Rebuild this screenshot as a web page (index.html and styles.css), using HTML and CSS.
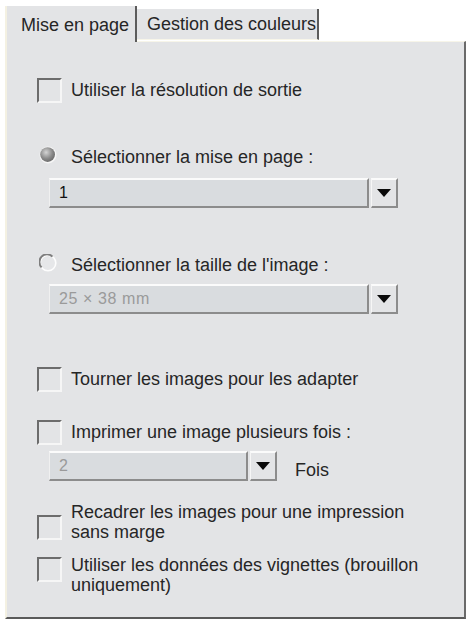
FILE: index.html
```html
<!DOCTYPE html>
<html lang="fr">
<head>
    <meta charset="UTF-8">
    <title>Mise en page</title>
    <link rel="stylesheet" href="styles.css">
</head>
<body>
    <div class="tabs">
        <div class="tab active">Mise en page</div>
        <div class="tab">Gestion des couleurs</div>
    </div>

    <div class="panel">
        <div class="row check-row first">
            <span class="check"></span>
            <span>Utiliser la résolution de sortie</span>
        </div>

        <div class="row radio-row r1">
            <svg class="radio" width="18" height="18" viewBox="0 0 18 18">
                <defs>
                    <radialGradient id="dot" cx="0.4" cy="0.35" r="0.7">
                        <stop offset="0" stop-color="#d4d4d4"/>
                        <stop offset="0.6" stop-color="#8a8a8a"/>
                        <stop offset="1" stop-color="#676767"/>
                    </radialGradient>
                </defs>
                <circle cx="9" cy="9" r="8.5" fill="#f6f6f6"/>
                <circle cx="8.6" cy="8.6" r="7.4" fill="url(#dot)"/>
            </svg>
            <span>Sélectionner la mise en page :</span>
        </div>
        <div class="combo c1">
            <div class="field">1</div>
            <div class="drop"><span class="arrow"></span></div>
        </div>

        <div class="row radio-row r2">
            <svg class="radio" width="18" height="18" viewBox="0 0 18 18">
                <circle cx="9" cy="9" r="7.8" fill="#e6e7e9" stroke="#fdfdfd" stroke-width="1.6"/>
                <path d="M2.6 13.4 A7.6 7.6 0 0 1 13.4 2.6" fill="none" stroke="#7e7e7e" stroke-width="2"/>
            </svg>
            <span>Sélectionner la taille de l'image :</span>
        </div>
        <div class="combo c2">
            <div class="field off">25 × 38 mm</div>
            <div class="drop"><span class="arrow"></span></div>
        </div>

        <div class="row check-row t1">
            <span class="check"></span>
            <span>Tourner les images pour les adapter</span>
        </div>

        <div class="row check-row t2">
            <span class="check"></span>
            <span>Imprimer une image plusieurs fois :</span>
        </div>
        <div class="combo-line">
            <div class="combo small">
                <div class="field off">2</div>
                <div class="drop"><span class="arrow"></span></div>
            </div>
            <span class="fois">Fois</span>
        </div>

        <div class="row check-row multi t3">
            <span class="check"></span>
            <span>Recadrer les images pour une impression<br>sans marge</span>
        </div>

        <div class="row check-row multi t4">
            <span class="check"></span>
            <span>Utiliser les données des vignettes (brouillon<br>uniquement)</span>
        </div>
    </div>
</body>
</html>
```

FILE: styles.css
```css
body {
    margin: 0;
    background: #ffffff;
    font-family: "Liberation Sans", Arial, sans-serif;
    font-size: 18px;
    color: #262626;
}

.tabs {
    display: flex;
    align-items: flex-end;
    padding: 7px 0 0 5px;
    height: 34px;
}

.tab {
    height: 31px;
    line-height: 31px;
    padding: 0 0 0 10px;
    background: #e3e4e6;
    border-right: 2px solid #5c5c5c;
    border-bottom: 1px solid #f7f5e9;
    box-sizing: border-box;
    width: 182px;
    margin-bottom: 1px;
    white-space: nowrap;
}

.tab.active {
    height: 36px;
    line-height: 38px;
    width: 132px;
    padding-left: 14px;
    border-left: 2px solid #f4f1e2;
    border-bottom: none;
    margin-bottom: -1px;
}

.panel {
    margin-left: 5px;
    width: 461px;
    height: 578px;
    box-sizing: border-box;
    background: #e3e4e6;
    border-left: 2px solid #f4f1e2;
    border-top: 1px solid #f7f5e9;
    border-right: 2px solid #6a6a6a;
    border-bottom: 2px solid #5a5a5a;
    padding: 36px 0 0 30px;
}

.row {
    display: flex;
    align-items: center;
    gap: 9px;
    height: 25px;
}

.check {
    width: 25px;
    height: 25px;
    box-sizing: border-box;
    border-top: 2px solid #6c6c6c;
    border-left: 2px solid #6c6c6c;
    border-right: 2px solid #f6f6f6;
    border-bottom: 2px solid #f6f6f6;
    flex: none;
}

.radio-row {
    padding-left: 2px;
    gap: 14px;
}

.radio {
    flex: none;
    margin-top: -5px;
}

.r1 { margin-top: 42px; }
.r2 { margin-top: 45px; }

.combo {
    display: flex;
    margin-left: 12px;
    height: 30px;
}

.c1 { margin-top: 8px; }
.c2 { margin-top: 6px; }

.field {
    width: 320px;
    box-sizing: border-box;
    background: #d9dcdf;
    border-top: 2px solid #fbfbfb;
    border-left: 1px solid #f0f0f0;
    border-right: 2px solid #8c8c8c;
    border-bottom: 2px solid #8c8c8c;
    padding-left: 9px;
    font-size: 16px;
    letter-spacing: 0.6px;
    line-height: 26px;
    color: #111;
}

.field.off {
    color: #9a9a9a;
}

.drop {
    width: 27px;
    margin-left: 2px;
    box-sizing: border-box;
    background: #e3e4e6;
    border-top: 2px solid #fbfbfb;
    border-left: 1px solid #f6f6f6;
    border-right: 2px solid #8c8c8c;
    border-bottom: 2px solid #8c8c8c;
    display: flex;
    align-items: center;
    justify-content: center;
}

.arrow {
    width: 0;
    height: 0;
    border-left: 7px solid transparent;
    border-right: 7px solid transparent;
    border-top: 8px solid #0a0a0a;
}

.t1 { margin-top: 53px; }
.t2 { margin-top: 28px; }

.combo-line {
    display: flex;
    align-items: center;
    margin-top: 5px;
}

.combo.small .field {
    width: 199px;
}

.fois {
    margin-left: 18px;
    margin-top: 10px;
}

.multi {
    height: 40px;
    line-height: 20px;
    align-items: flex-start;
}

.t3 { margin-top: 21px; }
.t3 .check { margin-top: 13px; }

.t4 { margin-top: 13px; }
.t4 .check { margin-top: 2px; }
```
